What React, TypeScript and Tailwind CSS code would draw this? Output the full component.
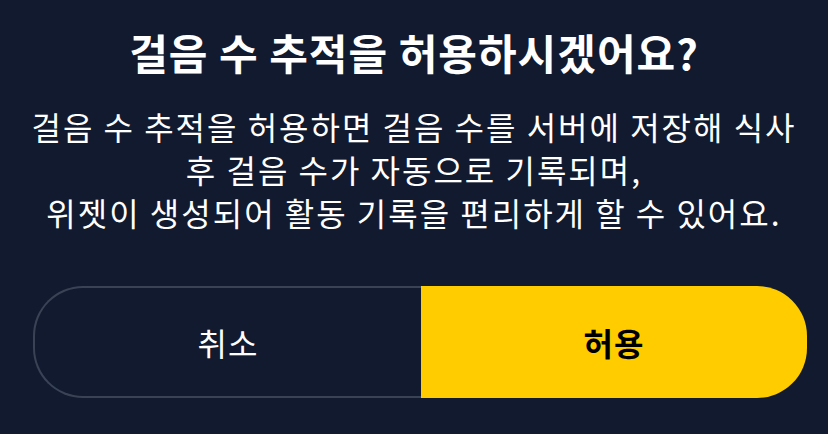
export default function App() {
  return (
    <div
      className="w-[828px] h-[434px] bg-[#111a2e] flex flex-col items-center overflow-hidden"
      style={{ fontFamily: '"Noto Sans CJK KR", "Noto Sans", sans-serif' }}
    >
      <h1 className="mt-[24px] text-[42px] leading-[56px] font-bold text-white tracking-[1px]">
        걸음 수 추적을 허용하시겠어요?
      </h1>
      <p className="mt-[25px] text-center text-[32px] leading-[43px] text-white tracking-[2px]">
        걸음 수 추적을 허용하면 걸음 수를 서버에 저장해 식사
        <br />
        후 걸음 수가 자동으로 기록되며,
        <br />
        위젯이 생성되어 활동 기록을 편리하게 할 수 있어요.
      </p>
      <div className="mt-[52px] self-start ml-[33px] w-[774px] h-[112px] flex">
        <button className="flex-1 rounded-l-[50px] border-2 border-r-0 border-[#3a4356] text-white text-[32px] tracking-[1px] flex items-center justify-center">
          취소
        </button>
        <button className="flex-1 rounded-r-[50px] bg-[#ffcc00] text-black text-[32px] tracking-[1px] font-bold flex items-center justify-center">
          허용
        </button>
      </div>
    </div>
  )
}
